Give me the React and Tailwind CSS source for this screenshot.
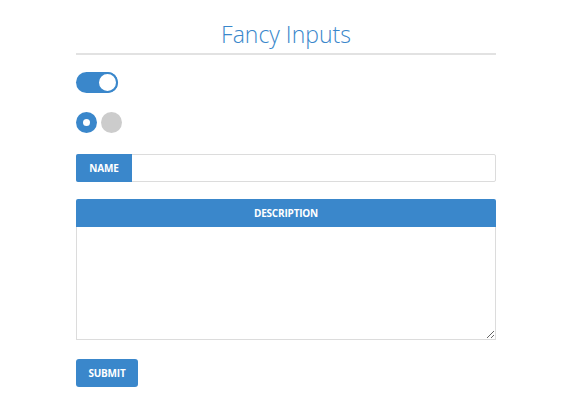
import React, { useState } from 'react';

export default function App() {
    const [on, setOn] = useState(true);
    const [choice, setChoice] = useState(0);

    return (
        <div className="w-[570px] h-[414px] bg-white font-['Open_Sans',sans-serif]">
            <div className="w-[420px] ml-[76px] pt-[20px]">
                <h1 className="text-center text-[23px] leading-[28px] font-light text-[#3a87cb]">Fancy Inputs</h1>
                <div className="mt-[5px] h-[2px] bg-[#e2e2e2]" />

                {/* Toggle */}
                <button
                    onClick={() => setOn(!on)}
                    className={`mt-[17px] flex items-center w-[42px] h-[21px] rounded-full ${on ? 'bg-[#3a87cb] justify-end' : 'bg-[#cccccc] justify-start'}`}
                >
                    <span className="w-[21px] h-[21px] rounded-full bg-white border-2 border-[#3a87cb]" />
                </button>

                {/* Radios */}
                <div className="mt-[19px] flex gap-[4px]">
                    {[0, 1].map((i) => (
                        <button
                            key={i}
                            onClick={() => setChoice(i)}
                            className={`w-[21px] h-[21px] rounded-full flex items-center justify-center ${choice === i ? 'bg-[#3a87cb]' : 'bg-[#cccccc]'}`}
                        >
                            {choice === i && <span className="w-[7px] h-[7px] rounded-full bg-white" />}
                        </button>
                    ))}
                </div>

                {/* Name */}
                <div className="mt-[21px] flex h-[28px] border border-[#dcdcdc] rounded-[2px]">
                    <div className="w-[56px] -m-px h-[28px] flex items-center justify-center bg-[#3a87cb] text-white text-[10px] font-bold tracking-[-0.2px] rounded-l-[2px]">NAME</div>
                    <input className="flex-1 outline-none px-2 text-[13px]" />
                </div>

                {/* Description */}
                <div className="mt-[17px] flex flex-col">
                    <div className="h-[28px] flex items-center justify-center bg-[#3a87cb] text-white text-[10px] font-bold tracking-[-0.2px] rounded-t-[2px]">DESCRIPTION</div>
                    <textarea className="h-[113px] border border-t-0 border-[#dcdcdc] outline-none p-2 text-[13px] resize-y" />
                </div>

                <button className="mt-[19px] w-[62px] h-[28px] bg-[#3a87cb] text-white text-[10px] font-bold tracking-[-0.2px] rounded-[3px]">SUBMIT</button>
            </div>
        </div>
    );
}
